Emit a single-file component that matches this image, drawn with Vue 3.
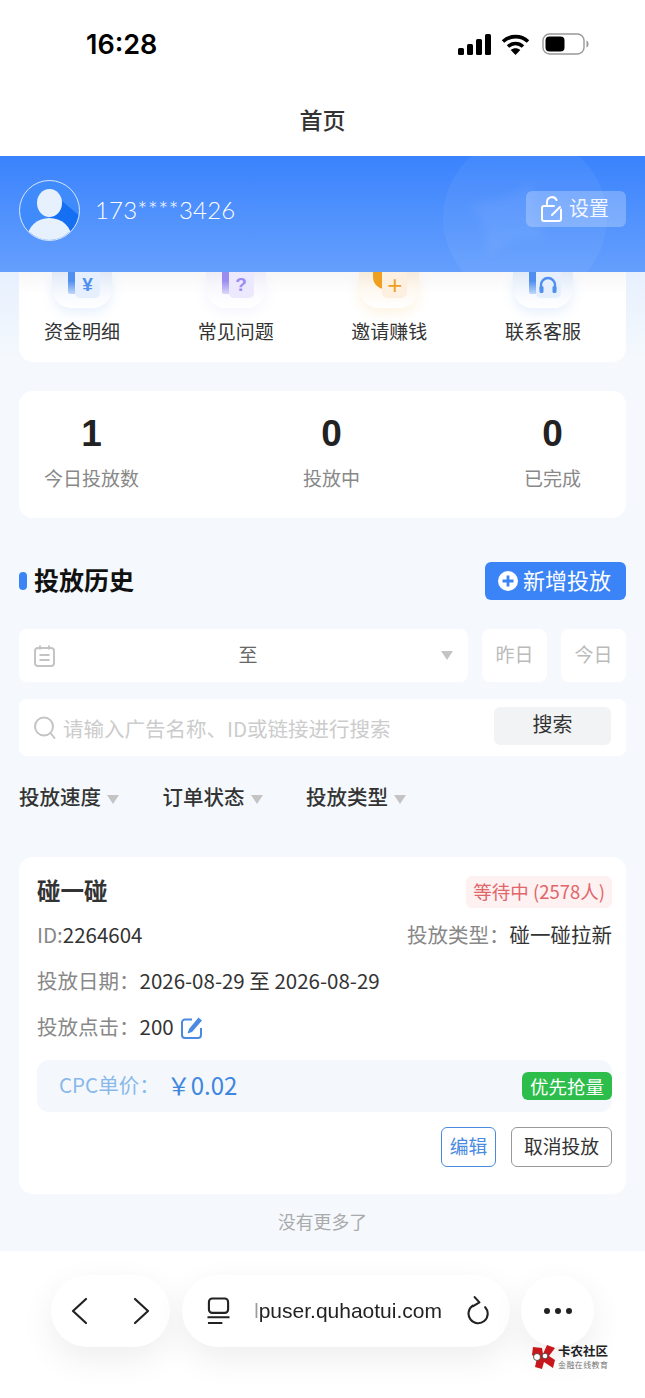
<template>
  <div class="page">
    <div class="status">
      <span class="time">16:28</span>
      <div class="status-icons">
        <svg width="33" height="21" viewBox="0 0 33 21" fill="#000">
          <rect x="0" y="14" width="6" height="7" rx="1.5" />
          <rect x="9" y="10" width="6" height="11" rx="1.5" />
          <rect x="18" y="5" width="6" height="16" rx="1.5" />
          <rect x="27" y="0" width="6" height="21" rx="1.5" />
        </svg>
        <svg width="29" height="21" viewBox="0 0 29 21" fill="none" stroke="#000" stroke-width="3.6">
          <path d="M2 7.5C9 1 20 1 27 7.5" />
          <path d="M7 12.5c4.500-4 10.500-4 15 0" />
          <path d="M14.500 21l-4.800-5c2.800-2.200 6.800-2.200 9.600 0z" fill="#000" stroke="none" />
        </svg>
        <svg class="battery" width="47" height="22" viewBox="0 0 47 22">
          <rect x="1" y="1" width="41" height="20" rx="6.500" fill="none" stroke="#999" stroke-width="1.400" />
          <rect x="3.500" y="3.500" width="19" height="15" rx="4" fill="#000" />
          <path d="M44.500 7.500c1.500.5 2 2 2 3.500s-.5 3-2 3.500z" fill="#999" />
        </svg>
      </div>
    </div>
    <div class="nav">首页</div>

    <header class="head">
      <svg class="head-deco" width="215" height="116" viewBox="0 0 215 116">
        <defs>
          <filter id="deco-blur"><feGaussianBlur stdDeviation="5" /></filter>
        </defs>
        <circle cx="95" cy="62" r="82" fill="#fff" opacity="0.05" />
        <path d="M40 50C60 40 75 50 100 25c8 20 0 40 18 60-25-8-45 0-60 18 0-25-4-38-18-53z" fill="#fff" opacity="0.05" filter="url(#deco-blur)" />
      </svg>
      <svg class="avatar" width="61" height="61" viewBox="0 0 61 61">
        <defs>
          <clipPath id="avatar-clip"><circle cx="30.500" cy="30.500" r="29.500" /></clipPath>
        </defs>
        <g clip-path="url(#avatar-clip)">
          <rect width="61" height="61" fill="#3f8bfb" />
          <path d="M32 12L61 36V61H30z" fill="#156ff2" />
          <ellipse cx="30.500" cy="23" rx="12.500" ry="14" fill="#e7f1fe" />
          <ellipse cx="30.500" cy="58" rx="22" ry="20" fill="#e7f1fe" />
        </g>
        <circle cx="30.500" cy="30.500" r="30" fill="none" stroke="#d5e5fd" />
      </svg>
      <span class="phone">173****3426</span>
      <div class="setting">
        <svg width="22" height="26" viewBox="0 0 22 26" fill="none" stroke="#fff" stroke-width="2" stroke-linecap="round" stroke-linejoin="round">
          <path d="M20 13.500V23a2 2 0 0 1-2 2H3a2 2 0 0 1-2-2V12a2 2 0 0 1 2-2h10" />
          <path d="M6 10V6a5 5 0 0 1 9.500-2" />
          <path d="M11 19l8-8" />
        </svg>
        <span>设置</span>
      </div>
    </header>

    <main class="content">
      <section class="menu">
        <div v-for="item in menus" :key="item.label" class="menu-item">
          <div class="tile" :class="item.kind">
            <i class="tile-back"></i>
            <div class="tile-front">
              <span v-if="item.glyph">{{ item.glyph }}</span>
              <svg v-else width="20" height="20" viewBox="0 0 20 20" fill="none" stroke="#4f8ff0" stroke-width="2.400">
                <path d="M3 15v-5a7 7 0 0 1 14 0v5" />
                <rect x="1.500" y="11" width="4" height="7" rx="1.500" fill="#4f8ff0" stroke="none" />
                <rect x="14.500" y="11" width="4" height="7" rx="1.500" fill="#4f8ff0" stroke="none" />
              </svg>
            </div>
          </div>
          <span class="menu-label">{{ item.label }}</span>
        </div>
      </section>

      <section class="stats">
        <div v-for="s in stats" :key="s.label" class="stat">
          <strong>{{ s.value }}</strong>
          <span>{{ s.label }}</span>
        </div>
      </section>

      <div class="history-head">
        <h2><i></i><span>投放历史</span></h2>
        <div class="add-btn">
          <svg width="20" height="20" viewBox="0 0 20 20">
            <circle cx="10" cy="10" r="10" fill="#fff" />
            <path d="M10 4.500v11M4.500 10h11" stroke="#3a84f8" stroke-width="2.800" />
          </svg>
          <span>新增投放</span>
        </div>
      </div>

      <div class="date-row">
        <div class="date-main">
          <svg width="21" height="22" viewBox="0 0 21 22" fill="none" stroke="#c4c4c4" stroke-width="2">
            <rect x="1" y="3" width="19" height="18" rx="3" />
            <path d="M6 0.500v4M15 0.500v4M5.500 10h10M5.500 15h10" />
          </svg>
          <span class="date-to">至</span>
          <i class="tri"></i>
        </div>
        <div class="date-quick">昨日</div>
        <div class="date-quick">今日</div>
      </div>

      <div class="search">
        <svg width="22" height="24" viewBox="0 0 22 24" fill="none" stroke="#c4c4c4" stroke-width="2">
          <circle cx="10" cy="10.500" r="9" />
          <path d="M16.500 17l4 5" stroke-linecap="round" />
        </svg>
        <span class="placeholder">请输入广告名称、ID或链接进行搜索</span>
        <div class="search-btn">搜索</div>
      </div>

      <div class="filters">
        <div v-for="f in filters" :key="f" class="filter">
          <span>{{ f }}</span>
          <i class="tri"></i>
        </div>
      </div>

      <article class="order">
        <div class="order-top">
          <h3>碰一碰</h3>
          <span class="badge">等待中 (2578人)</span>
        </div>
        <div class="order-row between">
          <span><em>ID:</em>2264604</span>
          <span><em>投放类型：</em>碰一碰拉新</span>
        </div>
        <div class="order-row">
          <span><em>投放日期：</em>2026-08-29 至 2026-08-29</span>
        </div>
        <div class="order-row">
          <span><em>投放点击：</em>200</span>
          <svg class="edit-icon" width="22" height="22" viewBox="0 0 22 22" fill="none">
            <path d="M11 2.500H4a3 3 0 0 0-3 3V18a3 3 0 0 0 3 3h13a3 3 0 0 0 3-3v-7" stroke="#4a8ae0" stroke-width="2" />
            <path d="M17.500.5l3.500 3L11 15l-4.500 1.500L8 12z" fill="#4a8ae0" />
          </svg>
        </div>
        <div class="price">
          <span class="price-label">CPC单价：</span>
          <span class="price-value">￥0.02</span>
          <span class="tag">优先抢量</span>
        </div>
        <div class="actions">
          <div class="act blue">编辑</div>
          <div class="act wide">取消投放</div>
        </div>
      </article>

      <div class="no-more">没有更多了</div>
    </main>

    <footer class="bar">
      <div class="pill arrows">
        <svg width="17" height="28" viewBox="0 0 17 28" fill="none" stroke="#222" stroke-width="2.200" stroke-linecap="round" stroke-linejoin="round">
          <path d="M15 2L2 14l13 12" />
        </svg>
        <svg width="17" height="28" viewBox="0 0 17 28" fill="none" stroke="#222" stroke-width="2.200" stroke-linecap="round" stroke-linejoin="round">
          <path d="M2 2l13 12L2 26" />
        </svg>
      </div>
      <div class="pill url">
        <svg width="24" height="28" viewBox="0 0 24 28" fill="none" stroke="#222" stroke-width="2.200">
          <rect x="2" y="1" width="20" height="15" rx="3.500" />
          <path d="M0.500 20.500h23M1 26.500h15" />
        </svg>
        <span class="url-text">lpuser.quhaotui.com</span>
        <svg width="24" height="32" viewBox="0 0 24 32" fill="none" stroke="#222" stroke-width="2.200" stroke-linecap="round" stroke-linejoin="round">
          <path d="M7 10.500A10 10 0 1 0 20 12" />
          <path d="M9 1.500l5 5.500-6.500 4" />
        </svg>
      </div>
      <div class="pill more"><i></i><i></i><i></i></div>
      <div class="mark">
        <svg width="24" height="24" viewBox="0 0 24 24">
          <path d="M1 2l9 1 1 6 4-9 8 3-6 8 6 4-2 8-9-6-2 7-7-2 2-9-5-3z" fill="#c8161d" />
          <circle cx="5" cy="12" r="3.500" fill="#fff" stroke="#333" stroke-width="0.800" />
          <circle cx="13" cy="11" r="2.800" fill="#fff" stroke="#333" stroke-width="0.800" />
        </svg>
        <div class="mark-text">
          <b>卡农社区</b>
          <span>金融在线教育</span>
        </div>
      </div>
    </footer>
  </div>
</template>

<script setup>
const menus = [
  { label: '资金明细', kind: 'blue', glyph: '¥' },
  { label: '常见问题', kind: 'purple', glyph: '?' },
  { label: '邀请赚钱', kind: 'orange', glyph: '+' },
  { label: '联系客服', kind: 'blue', glyph: '' },
];

const stats = [
  { value: 1, label: '今日投放数' },
  { value: 0, label: '投放中' },
  { value: 0, label: '已完成' },
];

const filters = ['投放速度', '订单状态', '投放类型'];
</script>

<style>
body {
  margin: 0;
  background: #fff;
}
</style>

<style scoped>
.page {
  position: relative;
  display: flex;
  flex-direction: column;
  width: 645px;
  height: 1398px;
  overflow: hidden;
  background: #fff;
  font-family: "Noto Sans CJK SC", "Liberation Sans", sans-serif;
  color: #333;
}
i, em {
  font-style: normal;
}
h2, h3 {
  margin: 0;
}

.status {
  display: flex;
  align-items: center;
  justify-content: space-between;
  height: 88px;
  padding: 0 56px 0 86px;
  flex-shrink: 0;
}
.time {
  font-family: Inter, sans-serif;
  font-size: 27px;
  font-weight: 600;
  color: #000;
}
.status-icons {
  display: flex;
  align-items: center;
  gap: 10px;
}
.battery {
  margin-left: 2px;
}
.nav {
  display: flex;
  justify-content: center;
  align-items: center;
  height: 68px;
  flex-shrink: 0;
  padding-bottom: 6px;
  box-sizing: border-box;
  font-size: 23px;
  font-weight: 500;
  color: #333;
}

.head {
  position: relative;
  display: flex;
  align-items: center;
  height: 116px;
  flex-shrink: 0;
  padding: 0 19px;
  overflow: hidden;
  background: linear-gradient(180deg, #3a83fd 0%, #659ffd 100%);
  color: #fff;
  z-index: 1;
}
.head-deco {
  position: absolute;
  top: 0;
  right: 0;
}
.avatar {
  position: relative;
  margin-top: -8px;
}
.phone {
  position: relative;
  margin: -10px 0 0 15px;
  font-family: Lato, sans-serif;
  font-size: 24px;
  font-weight: 300;
  letter-spacing: 0.2px;
  color: #fff;
}
.setting {
  position: relative;
  display: flex;
  align-items: center;
  gap: 6px;
  height: 36px;
  margin: -10px 0 0 auto;
  padding: 0 17px 0 15px;
  border-radius: 6px;
  background: rgba(255, 255, 255, 0.25);
  font-size: 20px;
  color: #f3f7ff;
}
.setting span {
  margin-bottom: 4px;
}

.content {
  flex: 1;
  padding: 0 19px;
  background: linear-gradient(180deg, #e7f0fe 0, #f5f9fd 90px);
}
.menu {
  display: flex;
  justify-content: space-between;
  height: 90px;
  padding: 0 45px 0 25px;
  border-radius: 0 0 14px 14px;
  background: linear-gradient(180deg, #f7f7f8 0, #fff 22px);
}
.menu-item {
  display: flex;
  flex-direction: column;
  align-items: center;
  width: 76px;
}
.menu-label {
  margin-top: 9px;
  font-size: 19px;
  line-height: 28px;
  color: #333;
}
.tile {
  position: relative;
  width: 60px;
  height: 36px;
  border-radius: 0 0 20px 20px;
  background: linear-gradient(180deg, var(--glow) 0, rgba(255, 255, 255, 0.6) 100%);
  box-shadow: 0 5px 12px var(--glow);
}
.tile.blue {
  --glow: rgba(79, 143, 240, 0.13);
  --main: #4f8ff0;
  --soft: #e6effd;
}
.tile.purple {
  --glow: rgba(154, 141, 240, 0.09);
  --main: #9a8df0;
  --soft: #ece8fe;
}
.tile.orange {
  --glow: rgba(240, 160, 32, 0.13);
  --main: #f0a020;
  --soft: #fdf0e0;
}
.tile-back {
  position: absolute;
  top: 0;
  left: 16px;
  width: 12px;
  height: 22px;
  background: linear-gradient(180deg, var(--main) 40%, rgba(255, 255, 255, 0.4) 130%);
  border-radius: 0 0 0 2px;
}
.tile.orange .tile-back {
  left: 14px;
  width: 22px;
  height: 17px;
  background: var(--main);
  border-radius: 0 0 0 12px;
}
.tile-front {
  position: absolute;
  top: 0;
  left: 23px;
  display: flex;
  justify-content: center;
  align-items: center;
  width: 25px;
  height: 26px;
  border-radius: 0 0 5px 5px;
  background: var(--soft);
  color: var(--main);
  font-family: "Liberation Sans", sans-serif;
  font-size: 19px;
  font-weight: 700;
}
.tile.orange .tile-front {
  font-size: 26px;
  font-weight: 400;
}

.stats {
  display: flex;
  justify-content: space-between;
  height: 127px;
  margin-top: 29px;
  padding: 21px 45px 0 25px;
  border-radius: 14px;
  background: #fff;
  box-sizing: border-box;
}
.stat {
  display: flex;
  flex-direction: column;
  align-items: center;
}
.stat strong {
  font-family: "Liberation Sans", sans-serif;
  font-size: 37px;
  line-height: 44px;
  color: #222;
}
.stat span {
  margin-top: 8px;
  font-size: 19px;
  line-height: 28px;
  color: #888;
}

.history-head {
  display: flex;
  justify-content: space-between;
  align-items: center;
  margin-top: 44px;
}
.history-head h2 {
  display: flex;
  align-items: center;
  gap: 7px;
  height: 38px;
  font-size: 25px;
  color: #111;
}
.history-head h2 i {
  width: 8px;
  height: 18px;
  border-radius: 4px;
  background: #3a84f8;
}
.history-head h2 span {
  margin-bottom: 5px;
}
.add-btn {
  display: flex;
  align-items: center;
  gap: 5px;
  height: 38px;
  padding: 0 15px 0 13px;
  border-radius: 6px;
  background: #3a84f8;
  color: #fff;
  font-size: 22px;
}
.add-btn span {
  margin-bottom: 4px;
}

.date-row {
  display: flex;
  gap: 14px;
  height: 53px;
  margin-top: 29px;
}
.date-main {
  display: flex;
  align-items: center;
  justify-content: space-between;
  flex: 1;
  padding: 0 15px;
  border-radius: 8px;
  background: #fff;
}
.date-to {
  margin-bottom: 4px;
  font-size: 19px;
  color: #666;
}
.date-quick {
  display: flex;
  justify-content: center;
  align-items: center;
  width: 65px;
  padding-bottom: 5px;
  box-sizing: border-box;
  border-radius: 8px;
  background: #fff;
  font-size: 19px;
  color: #bbb;
}
.tri {
  width: 0;
  height: 0;
  border-left: 6.500px solid transparent;
  border-right: 6.500px solid transparent;
  border-top: 9px solid #c4c4c4;
}

.search {
  display: flex;
  align-items: center;
  height: 57px;
  margin-top: 17px;
  padding: 0 15px;
  border-radius: 8px;
  background: #fff;
}
.placeholder {
  margin-left: 7px;
  font-size: 20.500px;
  color: #ccc;
}
.search-btn {
  display: flex;
  justify-content: center;
  align-items: center;
  width: 117px;
  height: 38px;
  margin-left: auto;
  margin-top: -4px;
  padding-bottom: 4px;
  box-sizing: border-box;
  border-radius: 6px;
  background: #f2f3f5;
  font-size: 20px;
  color: #333;
}

.filters {
  display: flex;
  align-items: center;
  height: 42px;
  margin-top: 21px;
}
.filter {
  display: flex;
  align-items: center;
  gap: 6px;
  width: 143.500px;
  font-size: 20.500px;
  font-weight: 500;
  color: #333;
}
.filter span {
  margin-bottom: 4px;
}
.filter .tri {
  margin-top: 2px;
}

.order {
  height: 337px;
  margin-top: 38px;
  padding: 19px 14px 0 18px;
  border-radius: 14px;
  background: #fff;
  box-sizing: border-box;
}
.order-top {
  display: flex;
  justify-content: space-between;
  align-items: center;
  height: 32px;
}
.order-top h3 {
  margin-bottom: 4px;
  font-size: 23.500px;
  color: #333;
}
.badge {
  display: flex;
  align-items: center;
  height: 32px;
  padding: 0 7px 2px;
  box-sizing: border-box;
  border-radius: 6px;
  background: #fdf1f1;
  color: #e0666a;
  font-size: 18.500px;
}
.order-row {
  display: flex;
  align-items: center;
  height: 46px;
  padding-bottom: 4px;
  box-sizing: border-box;
  font-size: 20.500px;
  color: #333;
}
.order-row.between {
  justify-content: space-between;
  margin-top: 5px;
}
.order-row em {
  color: #888;
}
.edit-icon {
  margin: 4px 0 0 7px;
}
.price {
  display: flex;
  align-items: center;
  height: 52px;
  margin-top: 9px;
  padding-left: 22px;
  border-radius: 12px;
  background: #f4f8fc;
}
.price-label {
  margin-bottom: 4px;
  font-size: 20.500px;
  color: #8ab8ea;
}
.price-value {
  margin: 0 0 4px 7px;
  font-size: 24px;
  color: #3f86e0;
}
.tag {
  display: flex;
  align-items: center;
  height: 28px;
  margin-left: auto;
  padding: 0 8px;
  border-radius: 6px;
  background: #2cbd4b;
  color: #fff;
  font-size: 18.500px;
}
.actions {
  display: flex;
  justify-content: flex-end;
  gap: 15px;
  margin-top: 15px;
}
.act {
  display: flex;
  justify-content: center;
  align-items: center;
  height: 40px;
  padding-bottom: 4px;
  border: 1px solid #999;
  border-radius: 6px;
  box-sizing: border-box;
  font-size: 18.800px;
  color: #333;
}
.act.wide {
  width: 101px;
}
.act.blue {
  width: 55px;
  border-color: #4a8ae0;
  color: #4a8ae0;
}
.no-more {
  margin-top: 14px;
  text-align: center;
  font-size: 17.800px;
  line-height: 26px;
  color: #aaa;
}

.bar {
  position: relative;
  display: flex;
  gap: 12px;
  height: 147px;
  flex-shrink: 0;
  padding: 24px 0 0 51px;
  background: #fff;
  box-sizing: border-box;
}
.pill {
  display: flex;
  align-items: center;
  height: 72px;
  border-radius: 36px;
  background: #fff;
  box-shadow: 0 12px 34px rgba(0, 0, 0, 0.07);
}
.arrows {
  justify-content: space-between;
  width: 119px;
  padding: 0 20px;
  box-sizing: border-box;
}
.url {
  width: 328px;
  padding: 0 21px 0 25px;
  box-sizing: border-box;
}
.url-text {
  margin: 0 24px 0 24px;
  font-family: "Liberation Sans", sans-serif;
  font-size: 21px;
  color: #222;
  white-space: nowrap;
  -webkit-mask-image: linear-gradient(90deg, rgba(0, 0, 0, 0.15) 0, #000 7px);
  mask-image: linear-gradient(90deg, rgba(0, 0, 0, 0.15) 0, #000 7px);
}
.more {
  justify-content: center;
  gap: 5px;
  width: 73px;
  margin-left: -1px;
}
.more i {
  width: 6px;
  height: 6px;
  border-radius: 50%;
  background: #222;
}
.mark {
  position: absolute;
  top: 93px;
  left: 532px;
  display: flex;
  align-items: center;
  gap: 2px;
}
.mark-text {
  display: flex;
  flex-direction: column;
}
.mark-text b {
  font-size: 12.500px;
  line-height: 13px;
  color: #222;
}
.mark-text span {
  margin-top: 4px;
  font-size: 8px;
  line-height: 8px;
  letter-spacing: 0.4px;
  color: #777;
}
</style>
